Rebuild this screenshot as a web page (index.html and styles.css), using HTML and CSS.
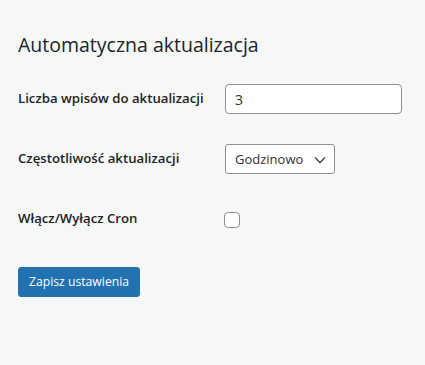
FILE: index.html
```html
<!DOCTYPE html>
<html lang="pl">
<head>
<meta charset="utf-8">
<link rel="stylesheet" href="styles.css">
</head>
<body>
<div class="wrap">
  <h2 class="title">Automatyczna aktualizacja</h2>
  <form class="form">
    <div class="row row-input">
      <label class="label" for="count">Liczba wpisów do aktualizacji</label>
      <input class="text-input" id="count" type="text" value="3">
    </div>
    <div class="row row-select">
      <label class="label" for="freq">Częstotliwość aktualizacji</label>
      <div class="select-wrap">
        <select class="select" id="freq"><option>Godzinowo</option></select>
        <svg class="chevron" width="12" height="8" viewBox="0 0 12 8"><path d="M1 1.5l5 5 5-5" fill="none" stroke="#50575e" stroke-width="1.6"/></svg>
      </div>
    </div>
    <div class="row row-check">
      <label class="label" for="cron">Włącz/Wyłącz Cron</label>
      <input class="checkbox" id="cron" type="checkbox">
    </div>
    <div class="actions">
      <button class="button" type="button">Zapisz ustawienia</button>
    </div>
  </form>
</div>
</body>
</html>
```
FILE: styles.css
```css
html, body {
  margin: 0;
  padding: 0;
  background: #f6f7f7;
}
body {
  font-family: "Open Sans", "Noto Sans", sans-serif;
  color: #1d2327;
  font-size: 14px;
}
.wrap {
  padding: 32px 18px 0 18px;
}
.title {
  margin: 0;
  font-size: 19.5px;
  font-weight: 500;
  line-height: 26px;
}
.form {
  margin-top: 26px;
}
.row {
  display: grid;
  grid-template-columns: 207px auto;
  align-items: start;
}
.label {
  font-weight: 600;
  font-size: 13.2px;
  line-height: 20px;
}
.row-input {
  height: 60px;
}
.row-input .label {
  padding-top: 4px;
}
.row-select {
  height: 60px;
}
.row-select .label {
  padding-top: 4px;
}
.row-check .label {
  padding-top: 4px;
}
.text-input {
  box-sizing: border-box;
  width: 177px;
  height: 30px;
  margin: 0;
  padding: 0 9px;
  border: 1px solid #8c8f94;
  border-radius: 4px;
  background: #fff;
  font-family: inherit;
  font-size: 14px;
  color: #2c3338;
}
.select-wrap {
  position: relative;
  width: 110px;
  height: 30px;
}
.select {
  appearance: none;
  -webkit-appearance: none;
  box-sizing: border-box;
  width: 110px;
  height: 30px;
  margin: 0;
  padding: 0 24px 0 9px;
  border: 1px solid #8c8f94;
  border-radius: 3px;
  background: #fff;
  font-family: inherit;
  font-size: 13px;
  color: #2c3338;
}
.chevron {
  position: absolute;
  left: 89px;
  top: 12px;
  pointer-events: none;
}
.checkbox {
  appearance: none;
  -webkit-appearance: none;
  box-sizing: border-box;
  width: 16px;
  height: 16px;
  margin: 8px 0 0 -1px;
  border: 1px solid #8c8f94;
  border-radius: 4px;
  background: #fff;
}
.actions {
  margin-top: 39px;
}
.button {
  box-sizing: border-box;
  height: 30px;
  padding: 0 10px;
  border: 1px solid #2271b1;
  border-radius: 3px;
  background: #2271b1;
  color: #fff;
  font-family: inherit;
  font-size: 12.2px;
  line-height: 28px;
}
```
